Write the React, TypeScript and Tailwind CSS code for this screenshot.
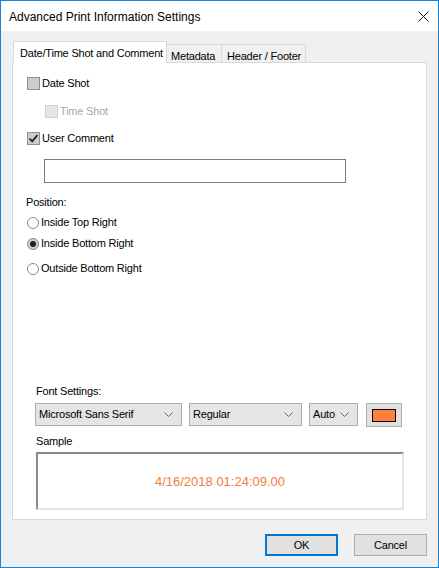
import React from "react"

const font = { fontFamily: '"Liberation Sans", Arial, sans-serif' }

function Check({ checked = false, disabled = false }: { checked?: boolean; disabled?: boolean }) {
  return (
    <div
      className={
        "w-[13px] h-[13px] border flex items-center justify-center shrink-0 " +
        (disabled ? "border-[#cfcfcf] bg-[#e6e6e6]" : "border-[#8e8e8e] bg-[#cccccc]")
      }
    >
      {checked && (
        <svg width="11" height="11" viewBox="0 0 11 11">
          <path d="M1.5 5.5 L4.2 8.3 L9.5 2" fill="none" stroke="#222" strokeWidth="1.8" />
        </svg>
      )}
    </div>
  )
}

function Radio({ checked = false }: { checked?: boolean }) {
  return (
    <div
      className={
        "w-[12px] h-[12px] rounded-full border flex items-center justify-center shrink-0 " +
        (checked ? "border-[#8a8a8a] bg-[#cfcfcf]" : "border-[#8a8a8a] bg-white")
      }
    >
      {checked && <div className="w-[6px] h-[6px] rounded-full bg-[#1f1f1f]" />}
    </div>
  )
}

function Chevron() {
  return (
    <svg width="9" height="5" viewBox="0 0 9 5">
      <path d="M0.5 0.5 L4.5 4.5 L8.5 0.5" fill="none" stroke="#6a6a6a" strokeWidth="1" />
    </svg>
  )
}

function Select({ label, w }: { label: string; w: string }) {
  return (
    <div className={w + " h-[23px] border border-[#adadad] bg-[#e5e5e5] flex items-center justify-between pl-[3px] pr-[8px] shrink-0"}>
      <span>{label}</span>
      <Chevron />
    </div>
  )
}

export default function App() {
  return (
    <div className="w-[439px] h-[568px] border border-[#1883d7] bg-[#f0f0f0] flex flex-col text-[11px] tracking-[-0.2px] text-black whitespace-nowrap" style={font}>
      {/* title bar */}
      <div className="h-[30px] bg-white flex items-center justify-between pl-[8px] pr-[9px] shrink-0 tracking-normal">
        <span className="text-[12px] mt-[1px]">Advanced Print Information Settings</span>
        <svg width="11" height="11" viewBox="0 0 11 11" className="mt-[1px]">
          <path d="M0.5 0.5 L10.5 10.5 M10.5 0.5 L0.5 10.5" stroke="#111" strokeWidth="1" />
        </svg>
      </div>

      <div className="pl-[11px] pr-[11px] pt-[10px] flex flex-col">
        {/* tabs */}
        <div className="h-[21px] flex items-end pl-[1px] relative z-10">
          <div className="w-[154px] h-[22px] bg-white border border-b-0 border-[#d9d9d9] pl-[6px] pt-[3px] -mb-px">
            Date/Time Shot and Comment
          </div>
          <div className="h-[18px] border border-l-0 border-b-0 border-[#d9d9d9] bg-[#f0f0f0] pl-[4px] pt-[3px] w-[55px]">
            Metadata
          </div>
          <div className="h-[18px] border border-l-0 border-b-0 border-[#d9d9d9] bg-[#f0f0f0] pl-[5px] pt-[3px] w-[84px]">
            Header / Footer
          </div>
        </div>

        {/* panel */}
        <div className="h-[458px] bg-white border border-[#d9d9d9] flex flex-col">
          <div className="flex items-center gap-[2px] h-[13px] mt-[14px] ml-[14px]">
            <Check />
            <span>Date Shot</span>
          </div>
          <div className="flex items-center gap-[2px] h-[13px] mt-[15px] ml-[32px] text-[#a8a8a8]">
            <Check disabled />
            <span>Time Shot</span>
          </div>
          <div className="flex items-center gap-[2px] h-[13px] mt-[14px] ml-[14px]">
            <Check checked />
            <span>User Comment</span>
          </div>
          <div className="w-[302px] h-[24px] border border-[#7a7a7a] bg-white mt-[14px] ml-[31px]" />

          <div className="h-[13px] mt-[13px] ml-[13px] leading-[13px]">Position:</div>
          <div className="flex items-center gap-[2px] h-[13px] mt-[7px] ml-[14px]">
            <Radio />
            <span>Inside Top Right</span>
          </div>
          <div className="flex items-center gap-[2px] h-[13px] mt-[8px] ml-[14px]">
            <Radio checked />
            <span>Inside Bottom Right</span>
          </div>
          <div className="flex items-center gap-[2px] h-[13px] mt-[12px] ml-[14px]">
            <Radio />
            <span>Outside Bottom Right</span>
          </div>

          <div className="flex-1" />

          <div className="pl-[22px] pb-[9px] flex flex-col">
            <div className="h-[13px] leading-[13px] ml-[1px]">Font Settings:</div>
            <div className="flex items-start mt-[5px]">
              <Select label="Microsoft Sans Serif" w="w-[147px]" />
              <div className="w-[7px] shrink-0" />
              <Select label="Regular" w="w-[113px]" />
              <div className="w-[7px] shrink-0" />
              <Select label="Auto" w="w-[49px]" />
              <div className="w-[8px] shrink-0" />
              <div className="w-[36px] h-[24px] border border-[#adadad] bg-[#e1e1e1] flex items-center justify-center shrink-0">
                <div className="w-[24px] h-[13px] border border-black bg-[#ff7f3f]" />
              </div>
            </div>
            <div className="h-[13px] leading-[13px] mt-[8px] ml-[1px]">Sample</div>
            <div className="w-[368px] h-[58px] mt-[4px] ml-[1px] border-[2px] border-t-[#8a8a8a] border-l-[#8a8a8a] border-r-[#e3e3e3] border-b-[#e3e3e3] bg-white flex items-center justify-center">
              <span className="text-[13px] tracking-normal text-[#f47c3c] mt-[1px]">4/16/2018 01:24:09.00</span>
            </div>
          </div>
        </div>

        {/* buttons */}
        <div className="flex justify-end mt-[14px] gap-[16px]">
          <div className="w-[73px] h-[22px] border-2 border-[#0078d7] bg-[#e1e1e1] flex items-center justify-center">OK</div>
          <div className="w-[73px] h-[22px] border border-[#adadad] bg-[#e1e1e1] flex items-center justify-center">Cancel</div>
        </div>
      </div>
    </div>
  )
}
